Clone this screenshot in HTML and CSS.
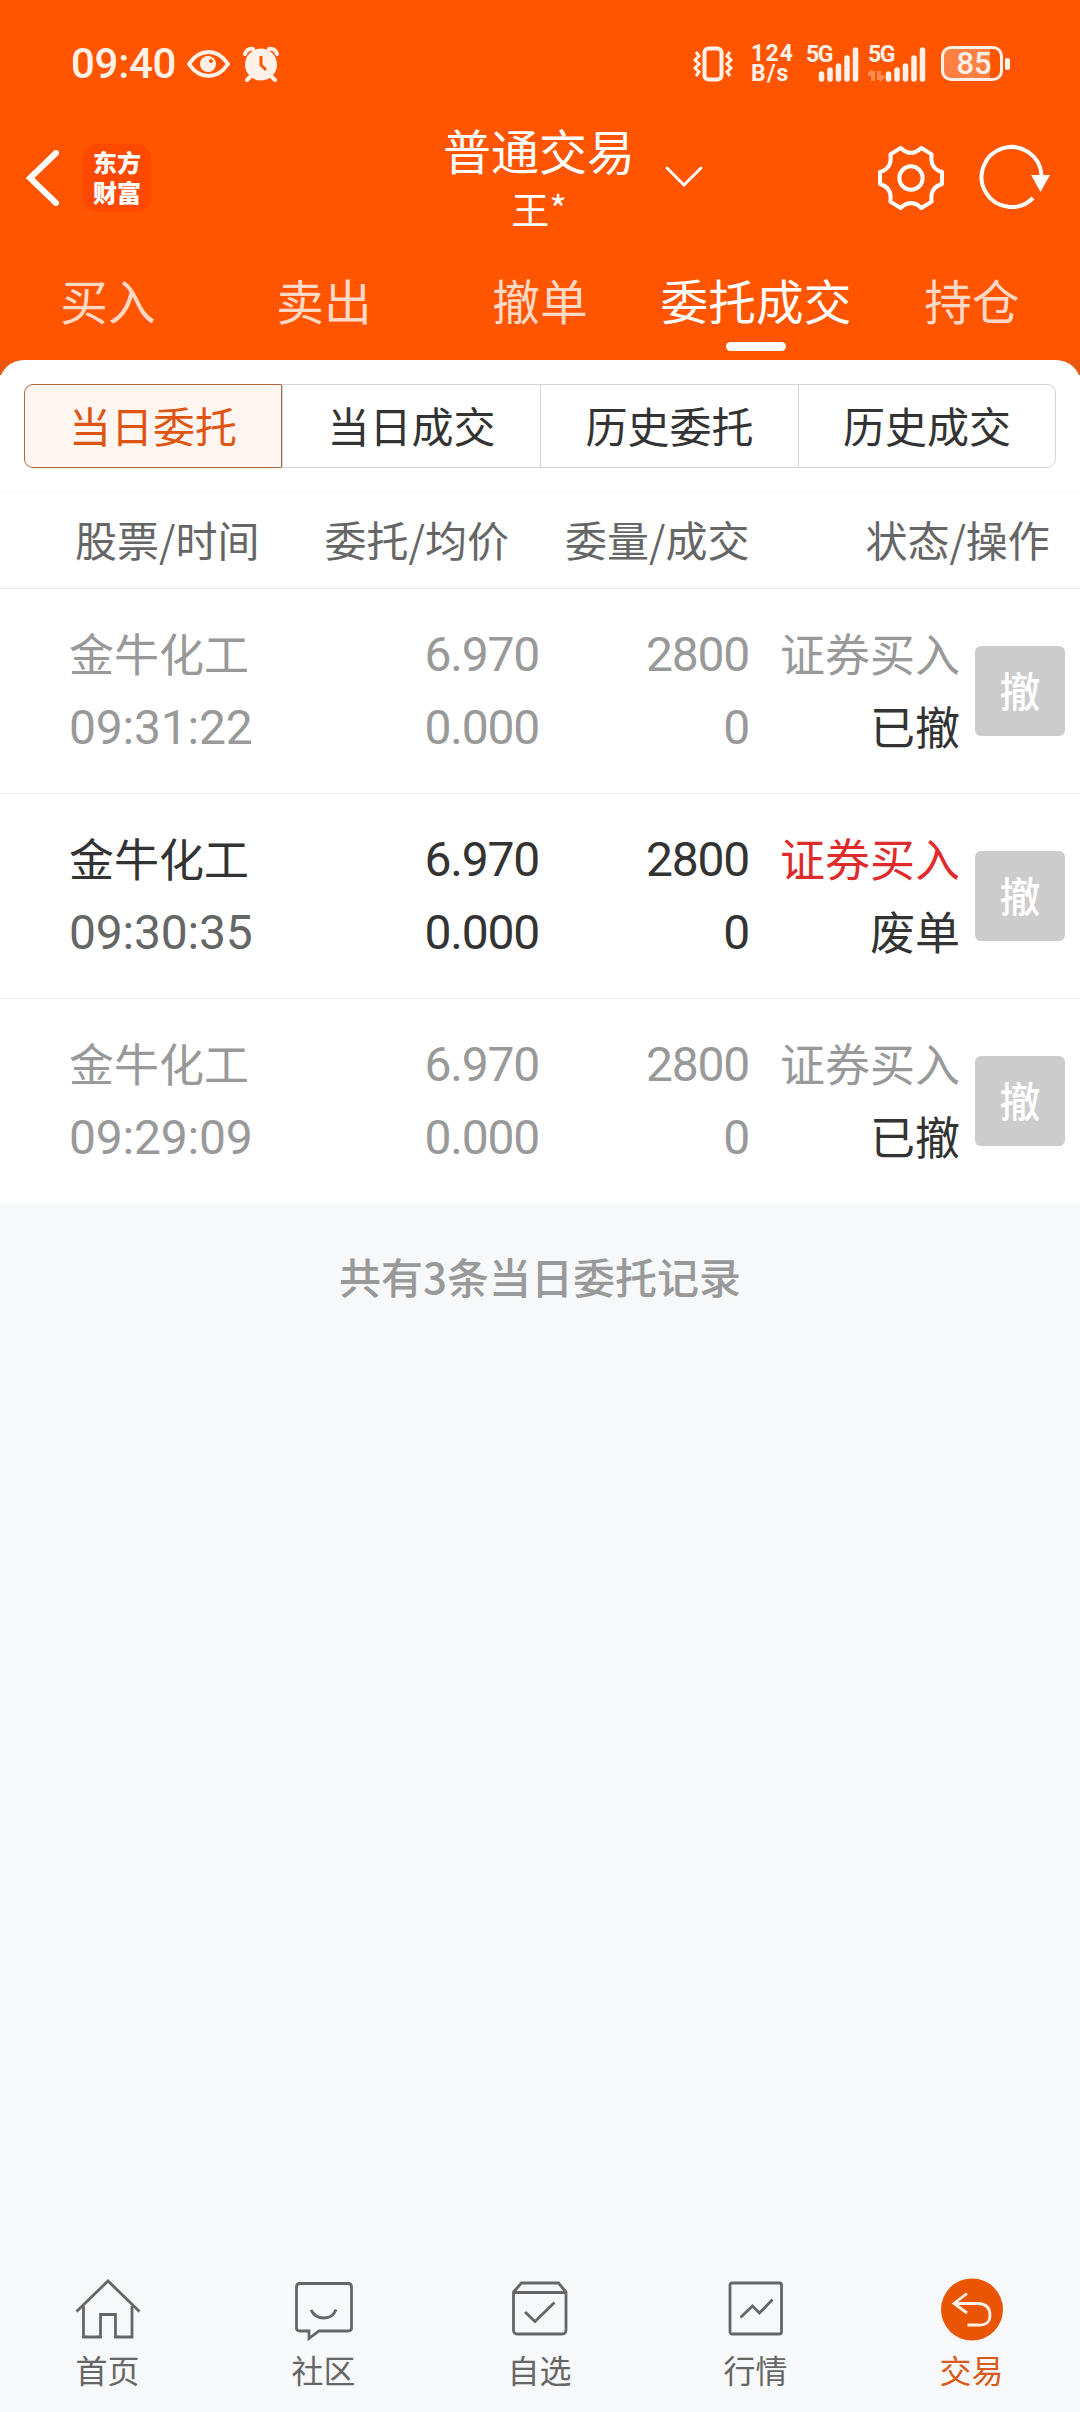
FILE: index.html
```
<!DOCTYPE html>
<html lang="zh-CN">
<head>
    <meta charset="utf-8">
    <title>普通交易</title>
    <meta name="viewport" content="width=device-width, initial-scale=1">
    <link rel="stylesheet" href="styles.css">
</head>
<body>

    <header class="top">
        <div class="statusBar">
            <span class="clock">09:40</span>
            <svg class="eye" width="43" height="28" viewBox="0 0 43 28">
                <path d="M2 14Q10 2 21.500 2T41 14Q33 26 21.500 26T2 14Z" fill="none" stroke="#fff1e8" stroke-width="4" stroke-linejoin="round"/>
                <circle cx="21" cy="14" r="8" fill="#fff1e8"/>
                <circle cx="24" cy="11" r="2" fill="#f50"/>
            </svg>
            <svg class="alarm" width="36" height="36" viewBox="0 0 36 36">
                <circle cx="18" cy="18.500" r="16" fill="#fff1e8"/>
                <path d="M2 8Q4 2 10 3M34 8Q32 2 26 3M8 30L4 34M28 30L32 34" stroke="#fff1e8" stroke-width="4" fill="none" stroke-linecap="round"/>
                <path d="M18 10V19L23 24" stroke="#f50" stroke-width="3" fill="none"/>
            </svg>

            <svg class="vibrate" width="40" height="36" viewBox="0 0 40 36">
                <rect x="11.500" y="2.500" width="17" height="31" rx="4" fill="none" stroke="#fff1e8" stroke-width="4"/>
                <path d="M3 6L6 10L2 14L6 18L2 22L6 26L3 30M37 6L34 10L38 14L34 18L38 22L34 26L37 30" fill="none" stroke="#fff1e8" stroke-width="3"/>
            </svg>
            <div class="speed"><span>124</span><span>B/s</span></div>
            <div class="signal">
                <span class="net">5G</span>
                <svg width="53" height="36" viewBox="0 0 53 36">
                    <path d="M15.500 28V33M24 24V33M32.500 20V33M41 12V33M49.500 4V33" stroke="#fff1e8" stroke-width="5.500" stroke-linecap="round"/>
                </svg>
            </div>
            <div class="signal">
                <span class="net">5G</span>
                <svg width="58" height="36" viewBox="0 0 58 36">
                    <path d="M5 25V35M0 29L5 25M11 25V34M16 30L11 34" stroke="#ff8a50" stroke-width="4"/>
                    <path d="M20.500 28V33M29 24V33M37.500 20V33M46 12V33M54.500 4V33" stroke="#fff1e8" stroke-width="5.500" stroke-linecap="round"/>
                </svg>
            </div>
            <div class="battery"><span>85</span></div>
            <i class="batteryCap"></i>
        </div>

        <div class="titleBar">
            <svg class="back" width="34" height="56" viewBox="0 0 34 56">
                <path d="M30 3L4 28L30 53" fill="none" stroke="#fff" stroke-width="6" stroke-linecap="round"/>
            </svg>
            <div class="logo"><span>东方</span><span>财富</span></div>
            <div class="title">
                <h1>普通交易</h1>
                <p>王*</p>
            </div>
            <svg class="arrow" width="38" height="22" viewBox="0 0 38 22">
                <path d="M2 2L19 19L36 2" fill="none" stroke="#fff" stroke-width="2.800" stroke-linecap="round"/>
            </svg>
            <svg class="gear" width="68" height="68" viewBox="-102 -102 204 204">
                <path d="M-31-90Q0-61 31-90L62-71C57-40 70-25 93-18V18C70 25 57 40 62 71L31 90Q0 61 -31 90L-62 71C-57 40-70 25-93 18V-18C-70-25-57-40-62-71Z" fill="none" stroke="#fff" stroke-width="12" stroke-linejoin="round"/>
                <circle r="35" fill="none" stroke="#fff" stroke-width="12"/>
            </svg>
            <svg class="refresh" width="74" height="68" viewBox="0 0 74 68">
                <path d="M63.500 31A30 30 0 1 0 55 54" fill="none" stroke="#fff" stroke-width="4"/>
                <path d="M53 31H72L62.500 48Z" fill="#fff"/>
            </svg>
        </div>

        <nav class="tabs">
            <span>买入</span>
            <span>卖出</span>
            <span>撤单</span>
            <span class="on">委托成交</span>
            <span>持仓</span>
        </nav>
    </header>

    <main>
        <div class="panelWrap">
            <div class="panel">
                <div class="segment">
                    <span class="on">当日委托</span>
                    <span>当日成交</span>
                    <span>历史委托</span>
                    <span>历史成交</span>
                </div>
            </div>
        </div>

        <div class="row head">
            <span>股票/时间</span>
            <span>委托/均价</span>
            <span>委量/成交</span>
            <span>状态/操作</span>
        </div>

        <div class="row order gray">
            <div class="name"><b>金牛化工</b><em>09:31:22</em></div>
            <div class="num"><em>6.970</em><em>0.000</em></div>
            <div class="num"><em>2800</em><em>0</em></div>
            <div class="state"><b>证券买入</b><b class="result">已撤</b></div>
            <button class="cancel">撤</button>
        </div>
        <div class="row order">
            <div class="name"><b>金牛化工</b><em class="time">09:30:35</em></div>
            <div class="num"><em>6.970</em><em>0.000</em></div>
            <div class="num"><em>2800</em><em>0</em></div>
            <div class="state"><b class="buy">证券买入</b><b class="result">废单</b></div>
            <button class="cancel">撤</button>
        </div>
        <div class="row order gray">
            <div class="name"><b>金牛化工</b><em>09:29:09</em></div>
            <div class="num"><em>6.970</em><em>0.000</em></div>
            <div class="num"><em>2800</em><em>0</em></div>
            <div class="state"><b>证券买入</b><b class="result">已撤</b></div>
            <button class="cancel">撤</button>
        </div>

        <p class="total">共有3条当日委托记录</p>
    </main>

    <footer class="bottomNav">
        <div>
            <svg width="66" height="66" viewBox="0 0 66 66">
                <path d="M1.500 36.500L33 6L64.500 36.500M8.500 31V62H25.500V39.500H40.500V62H57V31"/>
            </svg>
            <span>首页</span>
        </div>
        <div>
            <svg width="66" height="66" viewBox="0 0 66 66">
                <path d="M9 8.500H57Q60.500 8.500 60.500 12V53Q60.500 56 57 56H28L18 63.500V56H9Q5.500 56 5.500 53V12Q5.500 8.500 9 8.500ZM20 35Q24 43 33 43T45 34.500"/>
            </svg>
            <span>社区</span>
        </div>
        <div>
            <svg width="66" height="66" viewBox="0 0 66 66">
                <path d="M6.500 17L14.500 8H51.500L59 17V55Q59 59 55 59H10.500Q6.500 59 6.500 55ZM6.500 17.500H59M18 37L28 46.500L47.500 27.500"/>
            </svg>
            <span>自选</span>
        </div>
        <div>
            <svg width="66" height="66" viewBox="0 0 66 66">
                <rect x="7" y="8" width="51.500" height="51" rx="2"/>
                <path d="M17.500 42.500L29.500 31L36.500 38L49.500 24.500"/>
            </svg>
            <span>行情</span>
        </div>
        <div class="on">
            <svg width="66" height="66" viewBox="0 0 66 66">
                <circle cx="33" cy="34.500" r="31" fill="#ea5504" stroke="none"/>
                <path d="M28 18.500L15 28.500L28 38M15 28.500H39Q51 29 51 40T39 50H28.500" stroke="#fff1e8"/>
            </svg>
            <span>交易</span>
        </div>
    </footer>

</body>
</html>
```
FILE: styles.css
```
* {
    box-sizing: border-box;
}

body {
    margin: 0;
    width: 1080px;
    height: 2412px;
    display: flex;
    flex-direction: column;
    overflow: hidden;
    font-family: "Noto Sans CJK SC", sans-serif;
    background-color: #f7f8fa;
    color: #333;
}

h1, p {
    margin: 0;
    font-weight: normal;
}

b, em {
    font-weight: normal;
    font-style: normal;
}

svg {
    display: block;
    flex: none;
}

/* header */

.top {
    height: 360px;
    background-color: #f50;
    color: #fff;
}

.statusBar {
    display: flex;
    align-items: center;
    height: 127px;
    padding-left: 71px;
    font-family: Roboto, sans-serif;
    font-weight: 500;
    color: #fff1e8;
}

.clock {
    width: 116px;
    font-size: 42px;
    line-height: 50px;
    letter-spacing: -0.3px;
}

.alarm {
    margin-left: 13px;
}

.vibrate {
    margin-left: 414px;
}

.speed {
    display: flex;
    flex-direction: column;
    gap: 1px;
    width: 55px;
    margin-left: 18px;
    font-size: 23px;
    font-weight: 700;
    line-height: 19px;
    letter-spacing: 1.2px;
}

.signal {
    position: relative;
    margin-right: 9px;
}

.net {
    position: absolute;
    left: 0;
    top: 0;
    font-size: 23px;
    line-height: 18px;
    letter-spacing: -1.5px;
    font-weight: 700;
}

.battery {
    width: 62px;
    height: 35px;
    margin-left: 6px;
    padding-left: 4px;
    border: 3px solid #fff1e8;
    border-radius: 10px;
    background: linear-gradient(to right, #ff8043 46px, #f50 46px);
    font-size: 31px;
    line-height: 29px;
    text-align: center;
}

.batteryCap {
    width: 5px;
    height: 12px;
    margin-left: 2px;
    border-radius: 2px;
    background-color: #fff1e8;
}

.titleBar {
    display: flex;
    align-items: center;
    height: 102px;
    padding-left: 26px;
}

.logo {
    display: flex;
    flex-direction: column;
    gap: 5px;
    width: 68px;
    height: 68px;
    margin-left: 23px;
    padding-top: 5px;
    border-radius: 15px;
    background-color: #ff4800;
    font-size: 24px;
    font-weight: 900;
    line-height: 25px;
    text-align: center;
}

.title {
    width: 200px;
    margin-left: 288px;
    text-align: center;
}

.title h1 {
    font-size: 48px;
    line-height: 59px;
}

.title p {
    font-size: 38px;
    line-height: 57px;
}

.arrow {
    margin: -2px 0 0 26px;
}

.gear {
    margin-left: 174px;
}

.refresh {
    margin-left: 33px;
}

.tabs {
    display: flex;
    height: 131px;
}

.tabs span {
    display: flex;
    flex-direction: column;
    align-items: center;
    width: 216px;
    padding-top: 36px;
    font-size: 47.7px;
    line-height: 70px;
    color: #ffd9c6;
}

.tabs .on {
    color: #fff;
}

.tabs .on::after {
    content: "";
    width: 60px;
    height: 9px;
    margin-top: 7px;
    border-radius: 5px;
    background-color: #fff;
}

/* order list */

main {
    flex: 1;
}

.panelWrap {
    background: linear-gradient(#e9560c 15px, #fff 15px);
}

.panel {
    height: 131px;
    padding: 24px 24px 0;
    border-radius: 24px 24px 0 0 / 22px 22px 0 0;
    background-color: #fff;
}

.segment {
    display: flex;
    height: 84px;
}

.segment span {
    width: 258px;
    border: 1px solid #d3d6d8;
    border-right-width: 0;
    font-size: 42px;
    line-height: 80px;
    text-align: center;
}

.segment .on {
    border: 1px solid #b0683f;
    border-radius: 9px 0 0 9px;
    background-color: #fff6f2;
    color: #dd5511;
}

.segment span:last-child {
    border-right-width: 1px;
    border-radius: 0 9px 9px 0;
}

.row {
    display: flex;
    align-items: center;
    background-color: #fff;
    border-bottom: 1px solid #e9e9e9;
}

.head {
    height: 98px;
    border-top: 1px solid #f5f5f5;
    padding: 0 0 3px 75px;
    font-size: 42px;
    line-height: 90px;
    color: #666;
}

.head span:nth-child(2) {
    margin-left: 65px;
}

.head span:nth-child(3) {
    margin-left: 56px;
}

.head span:nth-child(4) {
    margin-left: 116px;
}

.order {
    height: 205px;
    padding-left: 69px;
    color: #333;
}

.order:nth-last-child(2) {
    border-bottom: 0;
    height: 204px;
}

.gray {
    color: #999;
}

.order b,
.order em {
    display: block;
    height: 73px;
    line-height: 73px;
    white-space: nowrap;
}

.order b {
    font-size: 45px;
    line-height: 70px;
}

.order em {
    font-family: Roboto, sans-serif;
    font-size: 48px;
    line-height: 74px;
    letter-spacing: -1.2px;
}

.name {
    width: 240px;
}

.order .name em {
    letter-spacing: -0.2px;
}

.time {
    color: #666;
}

.num {
    width: 230px;
    text-align: right;
}

.num + .num {
    width: 210px;
}

.state {
    width: 211px;
    text-align: right;
}

.order .result {
    color: #333;
}

.order .buy {
    color: #df2b2b;
}

.cancel {
    width: 90px;
    height: 90px;
    margin-left: 15px;
    padding: 0 0 4px;
    border: 0;
    border-radius: 6px;
    background-color: #ccc;
    font-family: inherit;
    font-size: 41px;
    font-weight: 500;
    line-height: 84px;
    color: #fff;
}

.total {
    padding-top: 37px;
    font-size: 42px;
    font-weight: 500;
    line-height: 72px;
    text-align: center;
    color: #999;
}

/* bottom nav */

.bottomNav {
    display: flex;
    height: 137px;
    color: #666;
}

.bottomNav div {
    display: flex;
    flex-direction: column;
    align-items: center;
    width: 216px;
    padding-right: 1px;
}

.bottomNav svg {
    fill: none;
    stroke: #666;
    stroke-width: 2.8px;
}

.bottomNav span {
    margin-top: 4px;
    font-size: 32px;
    line-height: 48px;
}

.bottomNav .on {
    color: #d95a1a;
}
```
